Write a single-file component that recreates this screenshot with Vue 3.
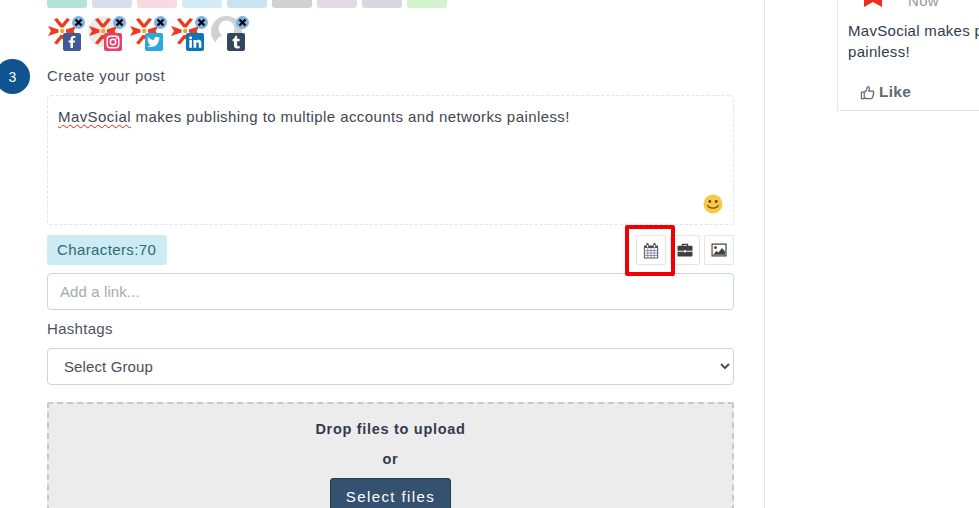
<script setup>
const swatches = ['#b2e4d6', '#d8dde9', '#fbd9e1', '#d3ecf8', '#cbe2ef', '#d1d1d1', '#e3d8e4', '#d5d9dd', '#d3f3cf']
const accounts = [
  { id: 'fb', bg: '#3f5a97', halo: false, avatar: 'logo', glyph: 'f' },
  { id: 'ig', bg: '#e8426a', halo: true, avatar: 'logo', glyph: 'ig' },
  { id: 'tw', bg: '#2aa9e0', halo: false, avatar: 'logo', glyph: 'tw' },
  { id: 'li', bg: '#0b78b5', halo: false, avatar: 'logo', glyph: 'in' },
  { id: 'tu', bg: '#34465d', halo: false, avatar: 'person', glyph: 't' }
]
</script>

<template>
  <div class="page">
    <main class="main">
      <div class="swatches">
        <span v-for="c in swatches" :key="c" class="swatch" :style="{ background: c }"></span>
      </div>

      <div class="accounts">
        <div v-for="a in accounts" :key="a.id" class="account">
          <svg class="avatar" viewBox="0 0 31 31">
            <template v-if="a.avatar === 'logo'">
              <circle v-if="a.halo" cx="15.500" cy="15.500" r="15.500" fill="#ececec" />
              <g fill="#ee3a1e">
                <path d="M7 3.500L10 2l5 6 5-6 3 1.500-6.500 8h-3z" />
                <path d="M1 10l10.500 3.500v3L1 20l3-5z" />
                <path d="M29.500 10L19 13.500v3L29.500 20l-3-5z" />
                <path d="M7 27l6.500-8h3l6.500 8-3 1.500-5-6-5 6z" />
              </g>
              <circle cx="15.200" cy="15" r="2.200" fill="#f5a623" />
            </template>
            <template v-else>
              <circle cx="15.500" cy="15.500" r="15.500" fill="#d0d0d0" />
              <circle cx="15.500" cy="12.500" r="8" fill="#fff" />
              <path d="M4 29c1.500-8 6-10 11.500-10S25.500 21 27 29c-6 3-17 3-23 0z" fill="#fff" />
            </template>
          </svg>
          <span class="network" :style="{ background: a.bg }">
            <svg viewBox="0 0 18 18" width="18" height="18">
              <path v-if="a.glyph === 'f'" d="M10 15V9.600h1.900l.3-2.200H10V6.100c0-.7.2-1.100 1.100-1.100h1.200V3c-.3 0-1-.1-1.800-.1-1.800 0-3 1.100-3 3.100v1.400H5.600v2.200h1.900V15z" fill="#fff" />
              <g v-else-if="a.glyph === 'ig'" fill="none" stroke="#fff" stroke-width="1.400">
                <rect x="3.200" y="3.200" width="11.600" height="11.600" rx="3.200" />
                <circle cx="9" cy="9" r="2.700" />
                <circle cx="12.400" cy="5.600" r=".5" fill="#fff" stroke-width=".6" />
              </g>
              <path v-else-if="a.glyph === 'tw'" d="M15.500 5c-.5.2-1 .4-1.500.4.6-.3 1-.8 1.200-1.400-.5.3-1.100.5-1.700.7a2.700 2.700 0 0 0-4.600 2.400C6.200 6.600 4.300 5.600 3 4c-.7 1.200-.4 2.800.8 3.600-.4 0-.8-.1-1.200-.3 0 1.300.9 2.400 2.100 2.700-.4.100-.8.100-1.200 0 .3 1.100 1.300 1.800 2.500 1.900-1 .8-2.400 1.200-3.900 1 1.200.8 2.600 1.200 4.100 1.200 5 0 7.900-4.200 7.700-8 .6-.4 1.100-.9 1.600-1.100z" fill="#fff" />
              <path v-else-if="a.glyph === 'in'" d="M3.300 7h2.600v7.700H3.300zM4.600 3.200a1.500 1.500 0 1 1 0 3 1.500 1.500 0 0 1 0-3zM7.500 7H10v1.100c.4-.7 1.200-1.300 2.400-1.300 2.600 0 3 1.700 3 3.900v4H12.800v-3.500c0-.9 0-2-1.200-2s-1.400.9-1.400 1.900v3.600H7.500z" fill="#fff" />
              <path v-else d="M10.500 15.500c-2.300 0-3.500-1.200-3.500-3V8.300H5.500V6.400C7.200 5.800 8 4.500 8.200 2.800h1.900v3h2.500v2.500h-2.500v3.800c0 1.100.8 1.300 2.600.8v2c-.6.400-1.400.6-2.200.6z" fill="#fff" />
            </svg>
          </span>
          <span class="remove">
            <svg viewBox="0 0 9 9" width="9" height="9">
              <path d="M1.500 1.500l6 6M7.500 1.500l-6 6" stroke="#000" stroke-width="2.200" fill="none" />
            </svg>
          </span>
        </div>
      </div>

      <div class="step-row">
        <span class="step">3</span>
        <span class="step-label">Create your post</span>
      </div>

      <div class="editor">
        <p class="editor-text"><span class="misspelled">MavSocial</span> makes publishing to multiple accounts and networks painless!</p>
        <svg class="emoji" viewBox="0 0 20 20" width="20" height="20">
          <circle cx="10" cy="10" r="9.500" fill="#f7c948" />
          <circle cx="6.800" cy="7.500" r="1.400" fill="#5b4a1d" />
          <circle cx="13.200" cy="7.500" r="1.400" fill="#5b4a1d" />
          <path d="M4.800 11.500c1.200 3.400 9.200 3.400 10.400 0" stroke="#6b5518" stroke-width="1.300" fill="none" stroke-linecap="round" />
        </svg>
      </div>

      <div class="toolbar">
        <span class="counter">Characters:70</span>
        <div class="tools">
          <button class="tool">
            <svg viewBox="0 0 16 17" width="16" height="17">
              <rect x="1.500" y="5.500" width="13" height="10.500" fill="#fff" stroke="#55556b" stroke-width="1" />
              <path d="M1.500 8.500h13M1.500 11h13M1.500 13.500h13M4.800 5.500V16M8 5.500V16M11.200 5.500V16" stroke="#7a7a9a" stroke-width=".8" />
              <path d="M1 6V3.500h2L3.800 1h1.400l.8 2.500h4L10.800 1h1.400l.8 2.500h2V6z" fill="#4a4a55" />
              <path d="M4.500 3v2.500M11.500 3v2.500" stroke="#fff" stroke-width="1.400" />
              <path d="M1 6v10" stroke="#e0a060" stroke-width=".6" />
              <path d="M15 6v10" stroke="#5aa0e0" stroke-width=".6" />
            </svg>
          </button>
          <button class="tool">
            <svg viewBox="0 0 16 16" width="16" height="16">
              <path d="M5.500 4.500V2.300h5v2.200" fill="none" stroke="#3f3f3f" stroke-width="1.300" />
              <path d="M.5 4.500a.8.8 0 0 1 .8-.8h13.400a.8.8 0 0 1 .8.8V8.800H.5z" fill="#3f3f3f" />
              <path d="M.5 9.800h15v3.900a.8.8 0 0 1-.8.8H1.300a.8.8 0 0 1-.8-.8z" fill="#3f3f3f" />
              <rect x="6.800" y="8" width="2.400" height="2.600" fill="#fff" stroke="#3f3f3f" stroke-width=".4" />
            </svg>
          </button>
          <button class="tool">
            <svg viewBox="0 0 16 16" width="16" height="16">
              <rect x="1" y="2.100" width="14" height="11.800" fill="#fff" stroke="#3f3f3f" stroke-width="1.200" />
              <circle cx="4.500" cy="5.700" r="1.400" fill="#3f3f3f" />
              <path d="M2 12.800l3.500-3.800 2 1.500L11 6l3 3.500v3.300z" fill="#3f3f3f" />
              <path d="M.3 2v12" stroke="#e0a060" stroke-width=".8" />
              <path d="M15.700 2v12" stroke="#5aa0e0" stroke-width=".8" />
            </svg>
          </button>
          <span class="highlight"></span>
        </div>
      </div>

      <input class="field" type="text" placeholder="Add a link..." />

      <label class="hashtags">Hashtags</label>
      <select class="field select">
        <option>Select Group</option>
      </select>

      <div class="dropzone">
        <div class="drop-title">Drop files to upload</div>
        <div class="drop-or">or</div>
        <button class="select-files">Select files</button>
      </div>
    </main>

    <aside class="side">
      <div class="preview">
        <div class="preview-head">
          <svg class="preview-logo" viewBox="0 0 18 7" width="18" height="7">
            <path d="M0 0h18v7L9 2 0 7z" fill="#ee2e1c" />
          </svg>
          <span class="now">Now</span>
        </div>
        <p class="preview-text">MavSocial makes publishing to multiple accounts and networks painless!</p>
        <div class="like">
          <svg viewBox="0 0 16 16" width="15" height="15">
            <path d="M1.500 7.500h3v7h-3zM4.500 8c2-1.500 3-3 3.300-5.500.1-1 2.200-1 2.200 1 0 1.200-.4 2-.8 3h4.300c1.500 0 1.500 2 .6 2.300.7.700.5 1.800-.3 2.200.4.800.1 1.600-.6 1.900.2 1-.4 1.600-1.400 1.600H8c-1.500 0-2.200-.5-3.500-.9" fill="none" stroke="#5f6973" stroke-width="1.300" stroke-linejoin="round" />
          </svg>
          <span>Like</span>
        </div>
      </div>
    </aside>
  </div>
</template>

<style>
html, body { margin: 0; overflow: hidden; background: #fff; }
</style>

<style scoped>
.page {
  width: 979px;
  height: 508px;
  overflow: hidden;
  display: flex;
  font-family: "Liberation Sans", Arial, sans-serif;
  color: #3f4a5a;
  background: #fff;
}
.main {
  box-sizing: border-box;
  width: 765px;
  flex: none;
  height: 508px;
  padding-left: 47px;
  padding-right: 30px;
  border-right: 1px solid #e6e6e6;
}
.swatches { display: flex; gap: 5px; height: 8px; margin-bottom: 8px; }
.swatch { width: 40px; height: 16px; margin-top: -8px; border-radius: 3px; flex: none; }
.accounts { display: flex; height: 35px; }
.account { position: relative; width: 41px; height: 35px; flex: none; }
.avatar { position: absolute; left: 0; top: 0; width: 31px; height: 31px; }
.network {
  position: absolute;
  left: 16px;
  top: 17px;
  width: 18px;
  height: 18px;
  border-radius: 2px;
}
.network svg { display: block; }
.remove {
  position: absolute;
  left: 25px;
  top: 0;
  width: 13px;
  height: 13px;
  border-radius: 50%;
  background: #7fb1e4;
  display: flex;
  align-items: center;
  justify-content: center;
}
.step-row { display: flex; align-items: center; height: 34px; position: relative; margin-top: 7px; margin-bottom: 3px; }
.step {
  position: absolute;
  left: -52px;
  top: 1px;
  width: 35px;
  height: 35px;
  border-radius: 50%;
  background: #0f5391;
  color: #fff;
  font-size: 14px;
  display: flex;
  align-items: center;
  justify-content: center;
}
.step-label { font-size: 15px; letter-spacing: .45px; color: #4a5260; }
.editor {
  position: relative;
  box-sizing: border-box;
  height: 130px;
  border: 1px dashed #e2e4e7;
  border-radius: 4px;
  padding: 11px 10px;
}
.editor-text {
  margin: 0;
  font-size: 15px;
  line-height: 20px;
  letter-spacing: .415px;
  color: #3f4650;
}
.misspelled { text-decoration: underline wavy #e0201c 1px; text-underline-offset: 2px; }
.emoji { position: absolute; right: 10px; bottom: 10px; }
.toolbar {
  display: flex;
  justify-content: space-between;
  align-items: flex-start;
  margin-top: 10px;
  height: 30px;
}
.counter {
  background: #cdebf2;
  color: #2c6a78;
  font-size: 15px;
  letter-spacing: .38px;
  line-height: 30px;
  padding: 0 11px 0 10px;
  border-radius: 3px;
}
.tools { display: flex; gap: 4px; position: relative; }
.tool {
  width: 30px;
  height: 30px;
  padding: 0;
  background: #fff;
  border: 1px solid #e4e4e4;
  border-radius: 2px;
  display: flex;
  align-items: center;
  justify-content: center;
}
.highlight {
  position: absolute;
  left: -11px;
  top: -10px;
  width: 50px;
  height: 51px;
  box-sizing: border-box;
  border: 4px solid #f00000;
  border-radius: 2px;
  pointer-events: none;
}
.field {
  display: block;
  box-sizing: border-box;
  width: 100%;
  height: 37px;
  background: #fff;
  border: 1px solid #ced4da;
  border-radius: 4px;
  font-family: inherit;
  font-size: 15px;
  color: #495057;
  outline: none;
}
input.field { margin-top: 8px; padding: 0 12px; letter-spacing: .1px; }
input.field::placeholder { color: #a5a9ae; opacity: 1; }
.hashtags { display: block; margin-top: 10px; font-size: 15px; line-height: 18px; color: #4a5260; letter-spacing: .3px; }
.select { margin-top: 10px; padding: 0 12px; letter-spacing: .12px; }
.dropzone {
  box-sizing: border-box;
  height: 140px;
  margin-top: 17px;
  background: #ececec;
  border: 2px dashed #c8c8c8;
  border-radius: 2px;
  text-align: center;
  padding-top: 15px;
  color: #343a4d;
  font-size: 14.500px;
  font-weight: 700;
  letter-spacing: .7px;
}
.drop-title { line-height: 20px; }
.drop-or { line-height: 20px; margin-top: 10px; }
.select-files {
  margin-top: 9px;
  width: 121px;
  height: 36px;
  background: #345270;
  border: 1px solid #23394f;
  border-radius: 3px;
  color: #fff;
  font-family: inherit;
  font-size: 15px;
  letter-spacing: 1.4px;
  padding: 0;
}
.side { flex: 1; position: relative; min-width: 0; }
.preview {
  box-sizing: border-box;
  margin-left: 72px;
  width: 300px;
  height: 111px;
  border: 1px solid #e6e6e6;
  border-top: 0;
  padding-left: 10px;
  position: relative;
}
.preview-head { height: 20px; position: relative; }
.preview-logo { position: absolute; left: 16px; top: 0; }
.now { position: absolute; left: 60px; top: -7px; font-size: 15px; line-height: 16px; color: #9a9a9a; letter-spacing: .3px; }
.preview-text {
  margin: 0;
  width: 450px;
  font-size: 15px;
  line-height: 21px;
  letter-spacing: .3px;
  color: #2f3b4c;
}
.like {
  display: flex;
  align-items: center;
  gap: 4px;
  margin-top: 21px;
  margin-left: 12px;
  font-size: 15.500px;
  font-weight: 700;
  letter-spacing: .3px;
  color: #5f6973;
}
</style>
